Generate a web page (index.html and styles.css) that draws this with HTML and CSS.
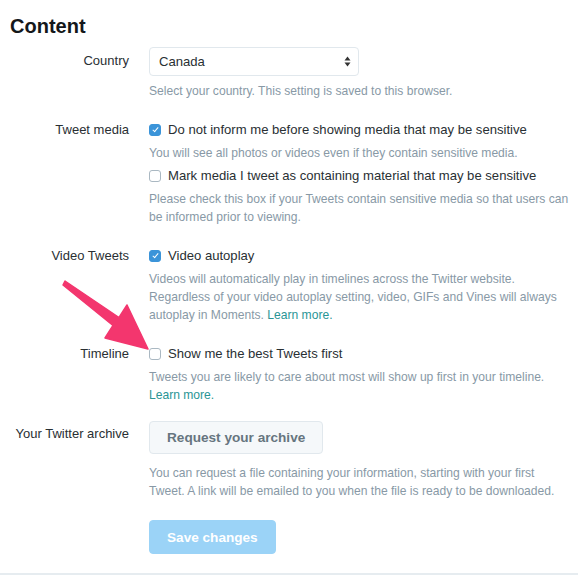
FILE: index.html
```html
<!DOCTYPE html>
<html lang="en">
<head>
<meta charset="UTF-8" />
<meta name="viewport" content="width=device-width, initial-scale=1" />
<title>Content settings</title>
<link rel="stylesheet" href="styles.css">
</head>
<body>

<div class="settings">
  <h1>Content</h1>

  <div class="row">
    <div class="label">Country</div>
    <div class="control">
      <div class="select">
        <span>Canada</span>
        <svg class="select-arrows" width="7" height="11" viewBox="0 0 7 11">
          <path d="M3.5 0.5 L6.5 4.5 H0.5 Z M3.5 10.5 L6.5 6.5 H0.5 Z" fill="#333" />
        </svg>
      </div>
      <p class="help">Select your country. This setting is saved to this browser.</p>
    </div>
  </div>

  <div class="row">
    <div class="label">Tweet media</div>
    <div class="control">
      <label class="check"><span class="box checked"></span>Do not inform me before showing media that may be sensitive</label>
      <p class="help">You will see all photos or videos even if they contain sensitive media.</p>
      <label class="check"><span class="box"></span>Mark media I tweet as containing material that may be sensitive</label>
      <p class="help">Please check this box if your Tweets contain sensitive media so that users can be informed prior to viewing.</p>
    </div>
  </div>

  <div class="row">
    <div class="label">Video Tweets</div>
    <div class="control">
      <label class="check"><span class="box checked"></span>Video autoplay</label>
      <p class="help">Videos will automatically play in timelines across the Twitter website. Regardless of your video autoplay setting, video, GIFs and Vines will always autoplay in Moments. <a href="#">Learn more.</a></p>
    </div>
  </div>

  <div class="row tight">
    <div class="label">Timeline</div>
    <div class="control">
      <label class="check"><span class="box"></span>Show me the best Tweets first</label>
      <p class="help">Tweets you are likely to care about most will show up first in your timeline. <a href="#">Learn more.</a></p>
    </div>
  </div>

  <div class="row archive">
    <div class="label">Your Twitter archive</div>
    <div class="control">
      <button class="btn">Request your archive</button>
      <p class="help">You can request a file containing your information, starting with your first Tweet. A link will be emailed to you when the file is ready to be downloaded.</p>
    </div>
  </div>

  <div class="row">
    <div class="label"></div>
    <div class="control">
      <button class="btn primary">Save changes</button>
    </div>
  </div>
</div>

<!-- annotation arrow pointing at the timeline checkbox -->
<svg class="arrow" width="578" height="581" viewBox="0 0 578 581">
  <path d="M65 281 L119 317.5 L127 305 L148 349 L105 338 L113 325.5 L63 285 Z" fill="#f3366e" stroke="#f3366e" stroke-width="1.5" stroke-linejoin="round" />
</svg>

</body>
</html>
```

FILE: styles.css
```css
/* Reset */
*, *::before, *::after {
  box-sizing: border-box;
  margin: 0; padding: 0;
}
html, body {
  background: #ffffff;
  font-family: 'Liberation Sans', Arial, sans-serif;
  color: #292f33;
}
body {
  position: relative;
  width: 578px;
  height: 581px;
  overflow: hidden;
}

.settings {
  padding: 14px 0 19px 0;
  border-bottom: 2px solid #e6ecf0;
}
h1 {
  font-size: 20px;
  font-weight: 700;
  color: #14171a;
  padding-left: 10px;
  line-height: 24px;
  margin-bottom: 9px;
}

.row {
  display: grid;
  grid-template-columns: 129px 1fr;
  column-gap: 20px;
  margin-bottom: 21px;
  padding-right: 6px;
}
.row.tight {
  margin-bottom: 17px;
}
.row.archive {
  margin-bottom: 20px;
}
.row:last-child {
  margin-bottom: 0;
}
.label {
  text-align: right;
  font-size: 13px;
  line-height: 18px;
}
.row:first-of-type .label {
  padding-top: 5px;
}

.control {
  font-size: 13.1px;
  line-height: 18px;
}
.help {
  font-size: 12.1px;
  line-height: 18px;
  color: #8899a6;
  margin-top: 5px;
}
.select + .help {
  margin-top: 6px;
}
.help a {
  color: #2a9595;
  text-decoration: none;
}

.select {
  width: 210px;
  height: 29px;
  border: 1px solid #e1e8ed;
  border-radius: 4px;
  display: flex;
  align-items: center;
  justify-content: space-between;
  padding: 0 7px 0 9px;
  font-size: 13.1px;
}

.check {
  display: flex;
  align-items: center;
  gap: 7px;
  margin-top: 5px;
}
.check:first-child {
  margin-top: 0;
}
.box {
  width: 12px;
  height: 12px;
  border: 1px solid #aab8c2;
  border-radius: 3px;
  background: #ffffff;
  flex: none;
  position: relative;
}
.box.checked {
  background: #3b94d9;
  border-color: #3b94d9;
}
.box.checked::after {
  content: "";
  position: absolute;
  left: 3.5px;
  top: 1px;
  width: 3px;
  height: 6px;
  border: solid #ffffff;
  border-width: 0 1.6px 1.6px 0;
  transform: rotate(40deg);
}

.archive .label {
  padding-top: 4px;
}
.archive .help {
  margin-top: 10px;
}
.btn {
  display: block;
  font-family: 'Liberation Sans', Arial, sans-serif;
  font-size: 13.6px;
  font-weight: 700;
  color: #66757f;
  background: #f5f8fa;
  border: 1px solid #e1e8ed;
  border-radius: 4px;
  height: 33px;
  padding: 0 17px;
}
.btn.primary {
  color: #ffffff;
  background: #9bd3f7;
  border-color: #9bd3f7;
  height: 34px;
}

.arrow {
  position: absolute;
  left: 0;
  top: 0;
  pointer-events: none;
}
```
